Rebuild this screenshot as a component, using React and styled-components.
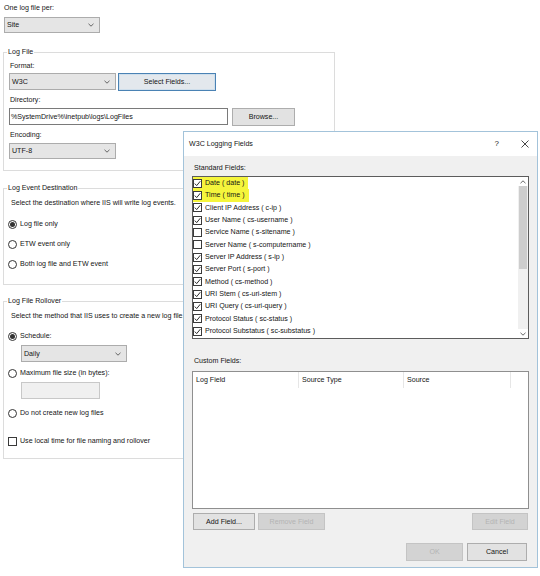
import React from 'react';
import styled, { createGlobalStyle } from 'styled-components';

const Global = createGlobalStyle`
  html, body { margin: 0; padding: 0; background: #fff; }
  body {
    font-family: "Liberation Sans", Arial, sans-serif;
    font-size: 7.1px;
    color: #151515;
  }
  * { box-sizing: border-box; }
`;

const Screen = styled.div`
  position: relative;
  width: 540px;
  height: 576px;
  overflow: hidden;
  background: #fff;
`;

const Page = styled.div`
  padding: 3px 0 0 3px;
`;

const Label = styled.div`
  line-height: 10px;
  height: 10px;
  white-space: nowrap;
  margin-top: ${p => p.$mt || 0}px;
  margin-left: ${p => p.$ml || 0}px;
`;

const SelectBox = styled.div`
  width: ${p => p.$w}px;
  height: ${p => p.$h || 17}px;
  margin-top: ${p => p.$mt || 0}px;
  margin-left: ${p => p.$ml || 0}px;
  background: #e5e5e5;
  border: 1px solid #acacac;
  display: flex;
  align-items: center;
  justify-content: space-between;
  padding: 0 5px 0 2px;
  line-height: 10px;
  white-space: nowrap;
`;

const TextBox = styled.div`
  width: ${p => p.$w}px;
  height: 17px;
  margin-top: ${p => p.$mt || 0}px;
  margin-left: ${p => p.$ml || 0}px;
  background: ${p => (p.$disabled ? '#f0f0f0' : '#fff')};
  border: 1px solid ${p => (p.$disabled ? '#c8c8c8' : '#7a7a7a')};
  display: flex;
  align-items: center;
  padding: 0 1px;
  white-space: nowrap;
  overflow: hidden;
`;

const Row = styled.div`
  display: flex;
  align-items: flex-start;
  gap: ${p => p.$gap || 0}px;
  margin-top: ${p => p.$mt || 0}px;
  margin-left: ${p => p.$ml || 0}px;
`;

const Button = styled.div`
  width: ${p => p.$w}px;
  height: ${p => p.$h || 18}px;
  margin-left: ${p => p.$ml || 0}px;
  display: flex;
  align-items: center;
  justify-content: center;
  white-space: nowrap;
  background: ${p => (p.$disabled ? '#d3d3d3' : p.$focus ? '#e3e8ed' : '#e2e2e2')};
  border: 1px solid ${p => (p.$disabled ? '#c4c4c4' : p.$focus ? '#4a82b4' : '#adadad')};
  box-shadow: ${p => (p.$focus ? 'inset 0 0 0 1px #cfdfec' : 'none')};
  color: ${p => (p.$disabled ? '#b4b4b4' : '#151515')};
`;

const Group = styled.fieldset`
  width: 332px;
  margin: ${p => p.$mt || 0}px 0 0 0;
  border: 1px solid #dcdcdc;
  padding: ${p => p.$pt || 4}px 8px ${p => p.$pb || 11}px 5px;
  min-inline-size: 0;
`;

const Legend = styled.legend`
  padding: 0 1px;
  margin-left: -2px;
  line-height: 10px;
  white-space: nowrap;
`;

const OptionRow = styled.div`
  display: flex;
  align-items: center;
  height: 12px;
  gap: 3px;
  margin-top: ${p => p.$mt || 0}px;
  margin-left: -1px;
  white-space: nowrap;
`;

const RadioDot = styled.span`
  width: 9px;
  height: 9px;
  border-radius: 50%;
  border: 1px solid #333;
  background: #fff;
  display: flex;
  align-items: center;
  justify-content: center;
  flex: none;
  &::after {
    content: '';
    width: 5px;
    height: 5px;
    border-radius: 50%;
    background: ${p => (p.$checked ? '#333' : 'transparent')};
  }
`;

const CheckSquare = styled.span`
  width: 9px;
  height: 9px;
  border: 1px solid #3a3a3a;
  background: #fff;
  flex: none;
  display: flex;
  align-items: center;
  justify-content: center;
`;

const Chevron = ({ dir = 'down' }) => (
  <svg width="6" height="4" viewBox="0 0 6 4">
    <polyline
      points={dir === 'down' ? '0.5,0.8 3,3.2 5.5,0.8' : '0.5,3.2 3,0.8 5.5,3.2'}
      fill="none"
      stroke="#555"
      strokeWidth="0.9"
    />
  </svg>
);

const Tick = () => (
  <svg width="7" height="7" viewBox="0 0 7 7">
    <polyline points="0.8,3.6 2.7,5.6 6.3,1.2" fill="none" stroke="#2a2a2a" strokeWidth="1" />
  </svg>
);

const Select = ({ children, ...rest }) => (
  <SelectBox {...rest}>
    <span>{children}</span>
    <Chevron />
  </SelectBox>
);

const Radio = ({ checked, children, mt }) => (
  <OptionRow $mt={mt}>
    <RadioDot $checked={checked} />
    <span>{children}</span>
  </OptionRow>
);

/* ---------- dialog ---------- */

const Dialog = styled.div`
  position: absolute;
  left: 183px;
  top: 131px;
  width: 355px;
  height: 437px;
  border: 1px solid #a3c3da;
  background: #f0f0f0;
  display: flex;
  flex-direction: column;
`;

const TitleBar = styled.div`
  height: 24px;
  background: #fff;
  display: flex;
  align-items: center;
  padding: 0 8px 1px 5px;
  white-space: nowrap;
`;

const TitleText = styled.span`
  flex: 1;
`;

const HelpMark = styled.span`
  font-size: 8px;
  margin-right: 22px;
  color: #222;
`;

const DialogBody = styled.div`
  padding: 0 8px;
  display: flex;
  flex-direction: column;
`;

const ListBox = styled.div`
  height: 163px;
  margin-top: 3px;
  border: 1px solid #5c5c5c;
  background: #fff;
  display: flex;
`;

const Items = styled.div`
  flex: 1;
  display: flex;
  flex-direction: column;
`;

const Item = styled.div`
  height: 12.33px;
  display: flex;
  align-items: center;
`;

const ItemInner = styled.span`
  display: inline-flex;
  align-items: center;
  gap: 3px;
  height: 100%;
  padding-right: ${p => (p.$hl ? '4px' : '0')};
  background: ${p => (p.$hl ? '#f5f53c' : 'transparent')};
  white-space: nowrap;
`;

const ScrollBar = styled.div`
  width: 10px;
  background: #f0f0f0;
  display: flex;
  flex-direction: column;
  align-items: center;
`;

const ScrollArrow = styled.div`
  height: 9px;
  width: 10px;
  display: flex;
  align-items: center;
  justify-content: center;
  background: #fff;
`;

const ScrollTrack = styled.div`
  flex: 1;
  width: 100%;
  padding: 0 1px;
`;

const Thumb = styled.div`
  height: 83px;
  background: #cdcdcd;
`;

const GridBox = styled.div`
  height: 138px;
  margin-top: 5px;
  border: 1px solid #8f8f8f;
  background: #fff;
`;

const GridHeader = styled.div`
  display: flex;
  height: 16px;
`;

const HeaderCell = styled.div`
  width: ${p => p.$w}px;
  height: 100%;
  display: flex;
  align-items: center;
  padding-left: 3px;
  border-right: 1px solid ${p => (p.$last ? 'transparent' : '#e6e6e6')};
  white-space: nowrap;
`;

const fields = [
  ['Date ( date )', true, true],
  ['Time ( time )', true, true],
  ['Client IP Address ( c-ip )', true],
  ['User Name ( cs-username )', true],
  ['Service Name ( s-sitename )', false],
  ['Server Name ( s-computername )', false],
  ['Server IP Address ( s-ip )', true],
  ['Server Port ( s-port )', true],
  ['Method ( cs-method )', true],
  ['URI Stem ( cs-uri-stem )', true],
  ['URI Query ( cs-uri-query )', true],
  ['Protocol Status ( sc-status )', true],
  ['Protocol Substatus ( sc-substatus )', true],
];

export default function App() {
  return (
    <Screen>
      <Global />
      <Page>
        <Label $ml={1}>One log file per:</Label>
        <Select $w={96} $h={16} $mt={4} $ml={1}>Site</Select>

        <Group $mt={14}>
          <Legend>Log File</Legend>
          <Label $ml={1}>Format:</Label>
          <Row $mt={2} $gap={2}>
            <Select $w={107}>W3C</Select>
            <Button $w={98} $focus>Select Fields...</Button>
          </Row>
          <Label $mt={4} $ml={1}>Directory:</Label>
          <Row $mt={3} $gap={4}>
            <TextBox $w={219}>%SystemDrive%\inetpub\logs\LogFiles</TextBox>
            <Button $w={63}>Browse...</Button>
          </Row>
          <Label $mt={4} $ml={1}>Encoding:</Label>
          <Select $w={107} $h={16} $mt={3}>UTF-8</Select>
        </Group>

        <Group $mt={12} $pt={5} $pb={14}>
          <Legend>Log Event Destination</Legend>
          <Label $ml={2}>Select the destination where IIS will write log events.</Label>
          <Radio checked mt={10}>Log file only</Radio>
          <Radio mt={8}>ETW event only</Radio>
          <Radio mt={8}>Both log file and ETW event</Radio>
        </Group>

        <Group $mt={11} $pt={5} $pb={11}>
          <Legend>Log File Rollover</Legend>
          <Label $ml={2}>Select the method that IIS uses to create a new log file.</Label>
          <Radio checked mt={9}>Schedule:</Radio>
          <Select $w={106} $mt={3} $ml={12}>Daily</Select>
          <Radio mt={5}>Maximum file size (in bytes):</Radio>
          <TextBox $w={79} $mt={3} $ml={12} $disabled />
          <Radio mt={8}>Do not create new log files</Radio>
          <OptionRow $mt={16}>
            <CheckSquare />
            <span>Use local time for file naming and rollover</span>
          </OptionRow>
        </Group>
      </Page>

      <Dialog>
        <TitleBar>
          <TitleText>W3C Logging Fields</TitleText>
          <HelpMark>?</HelpMark>
          <svg width="8" height="8" viewBox="0 0 8 8">
            <path d="M0.5 0.5 L7.5 7.5 M7.5 0.5 L0.5 7.5" stroke="#333" strokeWidth="0.9" />
          </svg>
        </TitleBar>
        <DialogBody>
          <Label $mt={7} $ml={2}>Standard Fields:</Label>
          <ListBox>
            <Items>
              {fields.map(([name, checked, hl]) => (
                <Item key={name}>
                  <ItemInner $hl={hl}>
                    <CheckSquare>{checked && <Tick />}</CheckSquare>
                    <span>{name}</span>
                  </ItemInner>
                </Item>
              ))}
            </Items>
            <ScrollBar>
              <ScrollArrow><Chevron dir="up" /></ScrollArrow>
              <ScrollTrack><Thumb /></ScrollTrack>
              <ScrollArrow><Chevron /></ScrollArrow>
            </ScrollBar>
          </ListBox>

          <Label $mt={17} $ml={2}>Custom Fields:</Label>
          <GridBox>
            <GridHeader>
              <HeaderCell $w={106}>Log Field</HeaderCell>
              <HeaderCell $w={105}>Source Type</HeaderCell>
              <HeaderCell $w={107}>Source</HeaderCell>
              <HeaderCell $w={17} $last />
            </GridHeader>
          </GridBox>

          <Row $mt={4} $ml={1} $gap={3}>
            <Button $w={62} $h={17}>Add Field...</Button>
            <Button $w={67} $h={17} $disabled>Remove Field</Button>
            <Button $w={56} $h={17} $disabled $ml={144}>Edit Field</Button>
          </Row>
          <Row $mt={13} $gap={4} $ml={214}>
            <Button $w={57} $disabled>OK</Button>
            <Button $w={60}>Cancel</Button>
          </Row>
        </DialogBody>
      </Dialog>
    </Screen>
  );
}
